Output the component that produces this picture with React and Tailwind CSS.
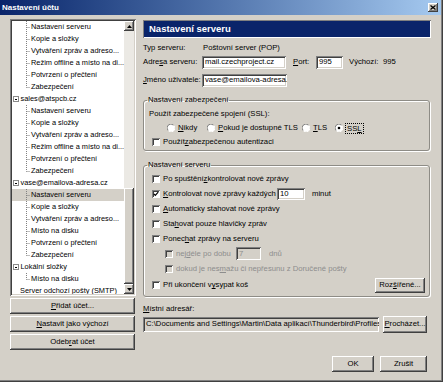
import React from 'react';

// Windows classic bevels
const sunken =
  'shadow-[inset_1px_1px_0_#808080,inset_-1px_-1px_0_#ffffff,inset_2px_2px_0_#404040,inset_-2px_-2px_0_#d4d0c8]';
const raised =
  'shadow-[inset_-1px_-1px_0_#404040,inset_1px_1px_0_#ffffff,inset_-2px_-2px_0_#808080,inset_2px_2px_0_#d4d0c8]';

const U = ({ children }) => <span className="underline underline-offset-[1px]">{children}</span>;

const Button = ({ className = '', children }) => (
  <div className={`flex items-center justify-center bg-[#d4d0c8] ${raised} ${className}`}>{children}</div>
);

const Check = ({ checked, disabled }) => (
  <span
    className={`flex items-center justify-center w-[8px] h-[8px] shrink-0 ${
      disabled ? 'bg-[#d4d0c8]' : 'bg-white'
    } shadow-[inset_1px_1px_0_#808080,inset_-1px_-1px_0_#ffffff,inset_2px_2px_0_#404040]`}
  >
    {checked && (
      <svg width="6" height="6" viewBox="0 0 6 6">
        <path d="M0.8 2.8 L2.3 4.3 L5.2 1.2" fill="none" stroke="#000" strokeWidth="1.2" />
      </svg>
    )}
  </span>
);

const Radio = ({ on }) => (
  <svg width="8" height="8" viewBox="0 0 8 8" className="shrink-0">
    <circle cx="4" cy="4" r="3.5" fill="#fff" />
    <path d="M1.2 6.6 A3.5 3.5 0 0 1 6.6 1.2" fill="none" stroke="#808080" strokeWidth="1" />
    <path d="M6.8 1.4 A3.5 3.5 0 0 1 1.4 6.8" fill="none" stroke="#ffffff" strokeWidth="1" />
    {on && <circle cx="4" cy="4" r="1.3" fill="#000" />}
  </svg>
);

const Input = ({ className = '', children, disabled }) => (
  <div
    className={`flex items-center pl-[3px] pr-[2px] overflow-hidden whitespace-nowrap ${
      disabled ? 'bg-[#d4d0c8] text-[#8d8d8d]' : 'bg-white'
    } ${sunken} ${className}`}
  >
    {children}
  </div>
);

const treeRows = [
  { t: 'Nastavení serveru', child: true },
  { t: 'Kopie a složky', child: true },
  { t: 'Vytváření zpráv a adreso...', child: true },
  { t: 'Režim offline a místo na di...', child: true },
  { t: 'Potvrzení o přečtení', child: true },
  { t: 'Zabezpečení', child: true, last: true },
  { t: 'sales@atspcb.cz', box: true },
  { t: 'Nastavení serveru', child: true },
  { t: 'Kopie a složky', child: true },
  { t: 'Vytváření zpráv a adreso...', child: true },
  { t: 'Režim offline a místo na di...', child: true },
  { t: 'Potvrzení o přečtení', child: true },
  { t: 'Zabezpečení', child: true, last: true },
  { t: 'vase@emailova-adresa.cz', box: true },
  { t: 'Nastavení serveru', child: true, selected: true },
  { t: 'Kopie a složky', child: true },
  { t: 'Vytváření zpráv a adreso...', child: true },
  { t: 'Místo na disku', child: true },
  { t: 'Potvrzení o přečtení', child: true },
  { t: 'Zabezpečení', child: true, last: true },
  { t: 'Lokální složky', box: true },
  { t: 'Místo na disku', child: true, last: true },
  { t: 'Server odchozí pošty (SMTP)' },
];

const TreeRow = ({ row }) => (
  <div className={`flex items-center h-[12px] shrink-0 whitespace-nowrap ${row.selected ? 'bg-[#d4d0c8]' : ''}`}>
    {row.child && (
      <svg width="19" height="12" viewBox="0 0 19 12" className="shrink-0">
        <path
          d={`M14.5 0 V${row.last ? 6.5 : 12} M14.5 6.5 H18.5`}
          fill="none"
          stroke="#808080"
          strokeDasharray="1 1"
        />
      </svg>
    )}
    {row.box && (
      <span className="ml-[1px] flex items-center justify-center w-[6px] h-[6px] border border-[#8a8a8a] bg-white shrink-0">
        <span className="w-[2px] h-[1px] bg-black" />
      </span>
    )}
    {!row.child && !row.box && <span className="w-[8px] shrink-0" />}
    <span className={row.box ? 'ml-[1.5px]' : ''}>{row.t}</span>
  </div>
);

const Arrow = ({ down }) => (
  <svg width="5" height="3" viewBox="0 0 5 3">
    <path d={down ? 'M0 0 H5 L2.5 3 Z' : 'M0 3 H5 L2.5 0 Z'} fill="#000" />
  </svg>
);

const Tree = () => (
  <div className={`flex h-[277px] bg-white p-[2px] ${sunken}`}>
    <div className="flex-1 flex flex-col overflow-hidden text-[7.4px]">
      {treeRows.map((row, i) => (
        <TreeRow key={i} row={row} />
      ))}
    </div>
    <div className="w-[10px] flex flex-col bg-[#ebe9e4]">
      <Button className="h-[10px] shrink-0">
        <Arrow />
      </Button>
      <div className="flex-1" />
      <div className={`h-[96px] shrink-0 bg-[#d4d0c8] ${raised}`} />
      <Button className="h-[10px] shrink-0">
        <Arrow down />
      </Button>
    </div>
  </div>
);

const Group = ({ title, className = '', children }) => (
  <fieldset className={`mr-[1px] border border-[#8e8c86] rounded-[3px] shadow-[inset_1px_1px_0_#ffffff,1px_1px_0_#ffffff] ${className}`}>
    <legend className="ml-[3px] px-[1px] h-[12px] leading-[12px]">{title}</legend>
    {children}
  </fieldset>
);

const CheckRow = ({ checked, disabled, indent, className = 'h-[15px]', children }) => (
  <div className={`flex items-center whitespace-nowrap ${indent ? 'pl-[21px]' : 'pl-[8px]'} ${className}`}>
    <Check checked={checked} disabled={disabled} />
    <span className={`ml-[3px] flex items-center ${disabled ? 'text-[#8d8d8d]' : ''}`}>{children}</span>
  </div>
);

export default function App() {
  return (
    <div className="w-[443px] h-[382px] flex flex-col bg-[#d4d0c8] pr-[2px] pb-[2px] shadow-[inset_-1px_-1px_0_#404040,inset_-2px_-2px_0_#808080] font-['Liberation_Sans',Arial,sans-serif] text-[7.7px] text-black overflow-hidden">
      {/* title bar */}
      <div className="h-[15px] shrink-0 flex items-center justify-between bg-linear-to-r from-[#0a246a] to-[#a6caf0]">
        <span className="pl-[2px] text-[8px] font-bold text-white">Nastavení účtu</span>
        <Button className="w-[10px] h-[9px] mr-[3px]">
          <svg width="6" height="5" viewBox="0 0 6 5">
            <path d="M0.5 0.5 L5.5 4.5 M5.5 0.5 L0.5 4.5" stroke="#000" strokeWidth="1.3" />
          </svg>
        </Button>
      </div>

      <div className="flex-1 flex pt-[4px] pl-[10px] gap-[7px]">
        {/* left: account tree */}
        <div className="w-[126px] flex flex-col">
          <Tree />
          <div className="mt-[2px] flex flex-col gap-[2px] pr-[1px]">
            <Button className="h-[16px]">
              <span>
                <U>P</U>řidat účet...
              </span>
            </Button>
            <Button className="h-[16px]">
              <span>
                <U>N</U>astavit jako výchozí
              </span>
            </Button>
            <Button className="h-[16px]">
              <span>
                Odeb<U>r</U>at účet
              </span>
            </Button>
          </div>
        </div>

        {/* right: server settings */}
        <div className="w-[288px] flex flex-col pt-[1px]">
          <div className="h-[18px] flex items-center pl-[6px] bg-[#0a246a] shadow-[inset_1px_1px_0_#808080,inset_-1px_-1px_0_#ffffff] text-white text-[9.5px] font-bold">
            Nastavení serveru
          </div>

          <div className="mt-[4px] h-[12px] flex items-center">
            <span className="w-[59px]">Typ serveru:</span>
            <span className="ml-[1px]">Poštovní server (POP)</span>
          </div>

          <div className="mt-[1px] h-[14px] flex items-center">
            <span className="w-[59px]">
              Adre<U>s</U>a serveru:
            </span>
            <Input className="w-[84px] h-[13px]">mail.czechproject.cz</Input>
            <span className="ml-[7px] w-[23px]">
              <U>P</U>ort:
            </span>
            <Input className="w-[27px] h-[13px]">995</Input>
            <span className="ml-[6px] w-[34px]">Výchozí:</span>
            <span>995</span>
          </div>

          <div className="mt-[4px] h-[14px] flex items-center">
            <span className="w-[59px]">
              <U>J</U>méno uživatele:
            </span>
            <Input className="w-[85px] h-[13px]">vase@emailova-adresa.cz</Input>
          </div>

          <Group title="Nastavení zabezpečení" className="mt-[7px]">
            <div className="flex flex-col pt-[1px] pb-[1px]">
              <div className="h-[14px] flex items-center pl-[5px]">Použít zabezpečené spojení (SSL):</div>
              <div className="h-[14px] flex items-center pl-[23px]">
                <span className="w-[40px] flex items-center gap-[3px]">
                  <Radio />
                  <span>
                    <U>N</U>ikdy
                  </span>
                </span>
                <span className="w-[95px] flex items-center gap-[3px]">
                  <Radio />
                  <span>
                    <U>P</U>okud je dostupné TLS
                  </span>
                </span>
                <span className="w-[33px] flex items-center gap-[3px]">
                  <Radio />
                  <span>
                    <U>T</U>LS
                  </span>
                </span>
                <span className="flex items-center gap-[2px]">
                  <Radio on />
                  <span className="border border-dotted border-black px-[1px] leading-[9px]">
                    SS<U>L</U>
                  </span>
                </span>
              </div>
              <CheckRow className="h-[14px]">
                Použít <U>z</U>abezpečenou autentizaci
              </CheckRow>
            </div>
          </Group>

          <Group title="Nastavení serveru" className="mt-[8px]">
            <div className="flex flex-col pb-[2px]">
              <CheckRow>
                Po spuštění <U>z</U>kontrolovat nové zprávy
              </CheckRow>
              <CheckRow checked>
                <span className="w-[114px]">
                  <U>K</U>ontrolovat nové zprávy každých
                </span>
                <Input className="w-[28px] h-[12px]">10</Input>
                <span className="ml-[7px]">minut</span>
              </CheckRow>
              <CheckRow>
                <U>A</U>utomaticky stahovat nové zprávy
              </CheckRow>
              <CheckRow>
                Sta<U>h</U>ovat pouze hlavičky zpráv
              </CheckRow>
              <CheckRow>
                Ponec<U>h</U>at zprávy na serveru
              </CheckRow>
              <CheckRow indent disabled>
                <span className="w-[60px]">
                  nej<U>d</U>éle po dobu
                </span>
                <Input disabled className="w-[25px] h-[13px]">
                  7
                </Input>
                <span className="ml-[8px]">dnů</span>
              </CheckRow>
              <CheckRow indent disabled>
                dokud je nes<U>m</U>ažu či nepřesunu z Doručené pošty
              </CheckRow>
              <div className="h-[18px] flex items-center justify-between pl-[8px] pr-[4px]">
                <span className="flex items-center">
                  <Check />
                  <span className="ml-[3px]">
                    Při ukončení v<U>y</U>sypat koš
                  </span>
                </span>
                <Button className="w-[50px] h-[15px]">
                  <span>
                    Roz<U>š</U>ířené...
                  </span>
                </Button>
              </div>
            </div>
          </Group>

          <div className="mt-[6px] h-[12px] flex items-center">
            <span>
              <U>M</U>ístní adresář:
            </span>
          </div>
          <div className="h-[18px] flex items-center gap-[4px]">
            <Input disabled className="w-[236px] h-[15px] !text-black">
              C:\Documents and Settings\Martin\Data aplikací\Thunderbird\Profiles\0x3kq7lm.default\Mail\pop.czechproject.cz
            </Input>
            <Button className="w-[44px] h-[17px]">
              <span>
                <U>P</U>rocházet...
              </span>
            </Button>
          </div>

          <div className="mt-[23px] flex justify-end gap-[6px] pr-[4px]">
            <Button className="w-[42px] h-[16px]">OK</Button>
            <Button className="w-[47px] h-[16px]">Zrušit</Button>
          </div>
        </div>
      </div>
    </div>
  );
}
